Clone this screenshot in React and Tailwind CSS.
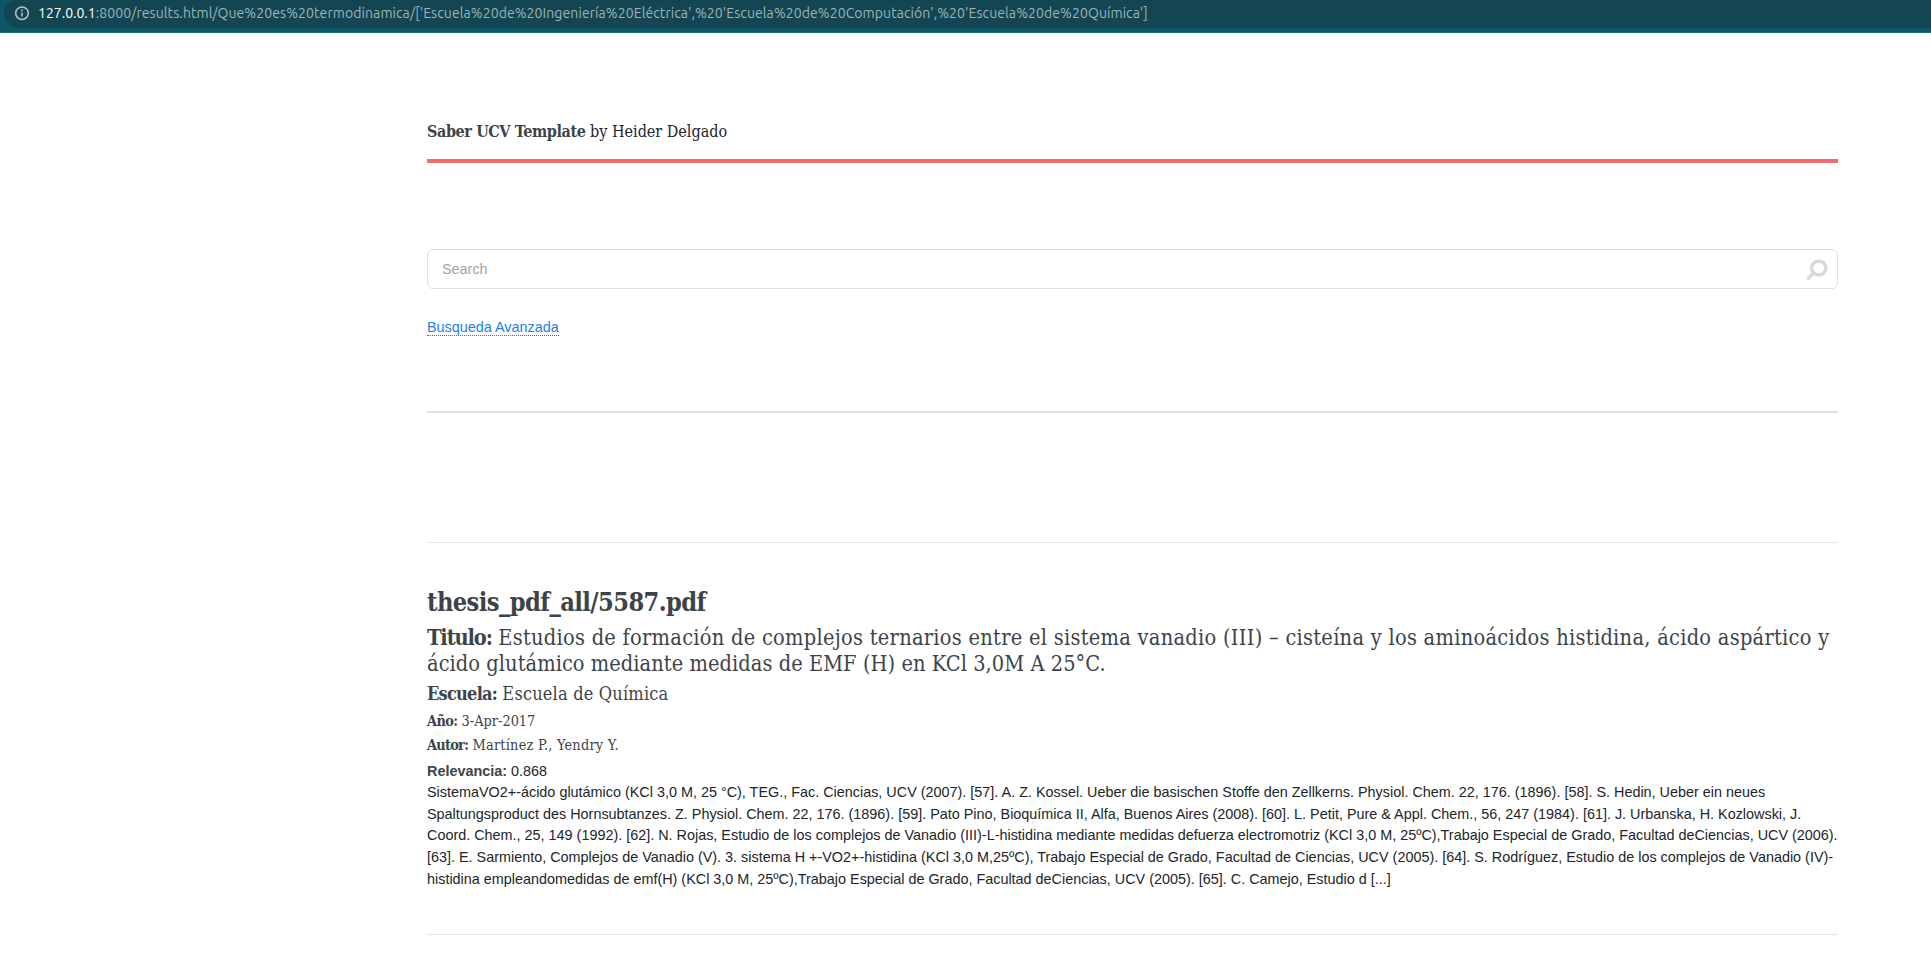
import React from "react";

const slab = "font-['Roboto_Slab','DejaVu_Serif_Condensed','DejaVu_Serif',serif] [font-stretch:semi-condensed]";

const excerpt = [
  "SistemaVO2+-ácido glutámico (KCl 3,0 M, 25 °C), TEG., Fac. Ciencias, UCV (2007). [57]. A. Z. Kossel. Ueber die basischen Stoffe den Zellkerns. Physiol. Chem. 22, 176. (1896). [58]. S. Hedin, Ueber ein neues",
  "Spaltungsproduct des Hornsubtanzes. Z. Physiol. Chem. 22, 176. (1896). [59]. Pato Pino, Bioquímica II, Alfa, Buenos Aires (2008). [60]. L. Petit, Pure & Appl. Chem., 56, 247 (1984). [61]. J. Urbanska, H. Kozlowski, J.",
  "Coord. Chem., 25, 149 (1992). [62]. N. Rojas, Estudio de los complejos de Vanadio (III)-L-histidina mediante medidas defuerza electromotriz (KCl 3,0 M, 25ºC),Trabajo Especial de Grado, Facultad deCiencias, UCV (2006).",
  "[63]. E. Sarmiento, Complejos de Vanadio (V). 3. sistema H +-VO2+-histidina (KCl 3,0 M,25ºC), Trabajo Especial de Grado, Facultad de Ciencias, UCV (2005). [64]. S. Rodríguez, Estudio de los complejos de Vanadio (IV)-",
  "histidina empleandomedidas de emf(H) (KCl 3,0 M, 25ºC),Trabajo Especial de Grado, Facultad deCiencias, UCV (2005). [65]. C. Camejo, Estudio d [...]",
];

export default function App() {
  return (
    <div className="h-[966px] w-[1931px] overflow-hidden bg-white font-['Liberation_Sans',Arial,sans-serif] text-[14.4px] text-[#212529]">
      <div className="flex h-[33px] border-b border-[#1c7581] bg-[#0d5767] pb-[4px] pl-1">
        <div className="flex h-7 flex-1 items-start rounded-bl-[16px] rounded-tl-[12px] bg-[#134652] pl-[10px] pt-[5px]">
          <svg className="h-4 w-4 shrink-0" viewBox="0 0 16 16" fill="none" stroke="#b3c6ca" strokeWidth="1.5">
            <circle cx="8" cy="8.2" r="6.3" />
            <path d="M8 7.4v4M8 4.6v1.6" />
          </svg>
          <div className="ml-[8px] -mt-[2px] whitespace-pre font-['Ubuntu','Noto_Sans',sans-serif] text-[14px] leading-5 tracking-[0.09px] text-[#9db4b9]">
            <span className="tracking-normal text-white">127.0.0.1</span>
            :8000/results.html/Que%20es%20termodinamica/['Escuela%20de%20Ingeniería%20Eléctrica',%20'Escuela%20de%20Computación',%20'Escuela%20de%20Química']
          </div>
        </div>
      </div>

      <main className="ml-[427px] w-[1411px]">
        <header className={`h-[130px] border-b-4 border-[#f56a6a] pt-[87px] text-[16px] leading-6 ${slab}`}>
          <strong className="font-bold tracking-[-0.4px] text-[#3d4449]">Saber UCV Template</strong> by Heider Delgado
        </header>

        <form className="mt-[86px] flex h-10 items-center justify-between rounded-[6px] border border-[#dce0e2] pl-[14px] pr-[9px]">
          <span className="pt-[2px] text-[14.4px] text-[#9fa3a6]">Search</span>
          <svg className="h-[22px] w-[22px]" viewBox="0 0 22 22" fill="none" stroke="#d6dadd">
            <circle cx="12.8" cy="10" r="7.1" strokeWidth="3.5" />
            <path d="M7.6 15L2.3 20.3" strokeWidth="3.6" strokeLinecap="round" />
          </svg>
        </form>

        <div className="mt-[28px] flex h-[19px]">
          <a className="h-[19px] border-b border-dotted border-[#007bff] leading-[20px] text-[#1a7ff0]">Busqueda Avanzada</a>
        </div>
        <hr className="mt-[75px] border-t-2 border-[#dfe3e3]" />
        <hr className="mt-[129px] border-t border-[#e5e5e5]" />

        <article className="text-[#3d4449]">
          <h2 className={`mt-[39px] h-[40px] text-[25.2px] font-bold leading-[40px] tracking-[-0.58px] ${slab}`}>thesis_pdf_all/5587.pdf</h2>
          <h3 className={`mt-[3px] whitespace-nowrap text-[21.6px] leading-[26px] tracking-[0.28px] ${slab}`}>
            <b className="tracking-[-1.1px]">Titulo:</b> Estudios de formación de complejos ternarios entre el sistema vanadio (III) – cisteína y los aminoácidos histidina, ácido aspártico y
            <br />
            <span className="tracking-[0.06px]">ácido glutámico mediante medidas de EMF (H) en KCl 3,0M A 25°C.</span>
          </h3>
          <h4 className={`mt-[4px] text-[18px] leading-[26px] tracking-[0.2px] ${slab}`}><b className="tracking-[-0.75px]">Escuela:</b> Escuela de Química</h4>
          <h5 className={`mt-[4px] text-[14.4px] leading-5 ${slab}`}><b className="tracking-[-0.6px]">Año:</b> 3-Apr-2017</h5>
          <h5 className={`mt-[4px] text-[14.4px] leading-5 tracking-[0.22px] ${slab}`}><b className="tracking-[-0.75px]">Autor:</b> Martínez P., Yendry Y.</h5>
          <div className="mt-[5px] leading-[22px]"><b>Relevancia:</b> <span className="text-[#212529]">0.868</span></div>
          <div className="-mt-px whitespace-nowrap text-[14.4px] leading-[22px] text-[#212529] [&>div:nth-child(3)]:-mt-px">
            {excerpt.map((line) => <div key={line}>{line}</div>)}
          </div>
        </article>
        <hr className="mt-[44px] border-t border-[#e2e2e2]" />
      </main>
    </div>
  );
}
